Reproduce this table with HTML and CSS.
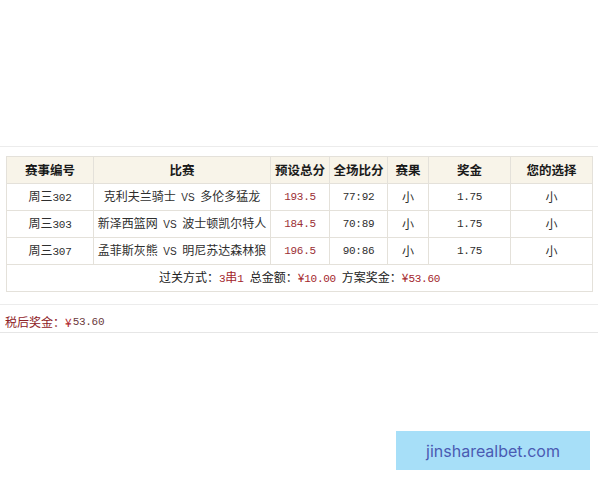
FILE: index.html
```html
<!DOCTYPE html>
<html>
<head>
<meta charset="utf-8">
<link rel="stylesheet" href="styles.css">
</head>
<body>
<div class="page">
  <div class="box">
    <table class="bets">
      <colgroup>
        <col class="c1"><col class="c2"><col class="c3"><col class="c4"><col class="c5"><col class="c6"><col class="c7">
      </colgroup>
      <thead>
        <tr>
          <th>赛事编号</th><th>比赛</th><th>预设总分</th><th>全场比分</th><th>赛果</th><th>奖金</th><th>您的选择</th>
        </tr>
      </thead>
      <tbody>
        <tr>
          <td>周三<span class="num">302</span></td>
          <td>克利夫兰骑士 <span class="vs">VS</span> 多伦多猛龙</td>
          <td class="red num">193.5</td>
          <td class="num">77:92</td>
          <td>小</td>
          <td class="num">1.75</td>
          <td class="pick">小</td>
        </tr>
        <tr>
          <td>周三<span class="num">303</span></td>
          <td>新泽西篮网 <span class="vs">VS</span> 波士顿凯尔特人</td>
          <td class="red num">184.5</td>
          <td class="num">70:89</td>
          <td>小</td>
          <td class="num">1.75</td>
          <td class="pick">小</td>
        </tr>
        <tr>
          <td>周三<span class="num">307</span></td>
          <td>孟菲斯灰熊 <span class="vs">VS</span> 明尼苏达森林狼</td>
          <td class="red num">196.5</td>
          <td class="num">90:86</td>
          <td>小</td>
          <td class="num">1.75</td>
          <td class="pick">小</td>
        </tr>
        <tr class="summary">
          <td colspan="7">过关方式：<span class="red"><span class="num">3</span>串<span class="num">1</span></span><span class="gap">总金额：</span><span class="red">¥<span class="num">10.00</span></span><span class="gap">方案奖金：</span><span class="red">¥<span class="num">53.60</span></span></td>
        </tr>
      </tbody>
    </table>
  </div>
  <div class="after">
    <span class="label">税后奖金：</span><span class="yen">¥</span><span class="num amount">53.60</span>
  </div>
  <div class="mark">jinsharealbet.com</div>
</div>
</body>
</html>
```
FILE: styles.css
```css
html, body {
  margin: 0;
  padding: 0;
  background: #ffffff;
}
body {
  font-family: "Noto Sans CJK SC", "Noto Sans", sans-serif;
  font-size: 12px;
  color: #222;
}
.page {
  width: 600px;
  height: 480px;
  padding-top: 146px;
  box-sizing: border-box;
}
.box {
  width: 598px;
  border-top: 1px solid #ececec;
  border-bottom: 1px solid #ececec;
  padding: 9px 0 12px 6px;
  box-sizing: border-box;
}
.bets {
  border-collapse: collapse;
  width: 586px;
  table-layout: fixed;
  border: 1px solid #e2ded6;
}
.c1 { width: 87px; }
.c2 { width: 177px; }
.c3 { width: 59px; }
.c4 { width: 58px; }
.c5 { width: 41px; }
.c6 { width: 82px; }
.c7 { width: 82px; }
.bets th, .bets td {
  border: 1px solid #e4e1da;
  height: 26px;
  padding: 0;
  text-align: center;
  vertical-align: middle;
  line-height: 14px;
  white-space: nowrap;
}
.bets th {
  background: #f8f4e9;
  font-weight: bold;
  font-size: 12.5px;
  color: #1a1a1a;
}
.bets td {
  color: #2e2e2e;
}
.num {
  font-family: "Liberation Mono", "DejaVu Sans Mono", monospace;
  font-size: 11px;
  letter-spacing: -0.3px;
}
.vs {
  font-family: "Liberation Sans", sans-serif;
  font-size: 10px;
  margin: 0 3px;
}
.red {
  color: #a3262c;
}
.bets td.red { color: #9b2f35; }
.pick {
  color: #9a6464;
}
.gap {
  margin-left: 6px;
}
.summary td {
  color: #222;
}
.after {
  width: 598px;
  height: 28px;
  border-bottom: 1px solid #e6e6e6;
  padding: 6px 0 0 5px;
  box-sizing: border-box;
  display: flex;
  align-items: center;
}
.label {
  color: #8e2126;
}
.yen {
  color: #b0262c;
}
.amount {
  color: #6a3a3c;
  margin-left: 1px;
}
.mark {
  margin: 98px 0 0 396px;
  width: 194px;
  height: 39px;
  background: #a7dff8;
  color: #4a5bb3;
  font-family: "Inter", "Noto Sans", sans-serif;
  font-size: 16px;
  display: flex;
  align-items: center;
  justify-content: center;
}
```
